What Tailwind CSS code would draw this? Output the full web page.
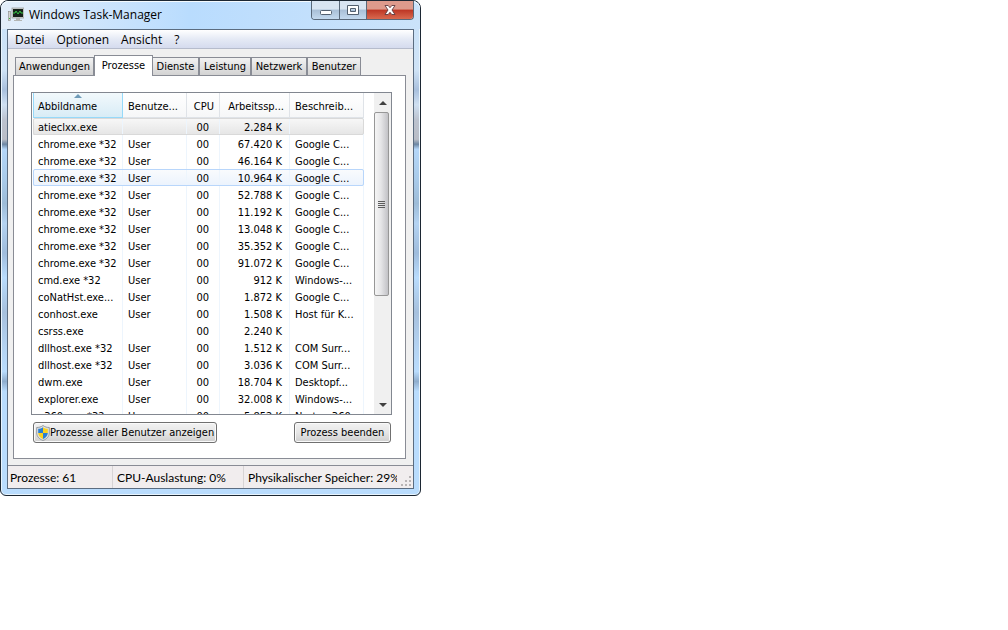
<!DOCTYPE html>
<html lang="de">
<head>
  <meta charset="UTF-8">
  <meta name="viewport" content="width=device-width, initial-scale=1.0">
  <title>Windows Task-Manager</title>
  <script src="https://cdn.jsdelivr.net/npm/@tailwindcss/browser@4"></script>
</head>
<body class="bg-white font-['Open_Sans','Noto_Sans',sans-serif] text-xs text-black">
  <!-- Fenster -->
  <div class="w-full max-w-[421px] rounded-t-lg rounded-b-md border border-[#1c2733] bg-[linear-gradient(#c9e2fa_0%,#cfe3f6_14%,#a9c0dd_18%,#cfe0f2_21%,#bcc3cf_24%,#b9bdc6_28%,#6d87a3_29%,#b4d6f8_30%,#a9cbea_36%,#9dbcd8_41%,#b4d3f2_45%,#9fbcdc_51%,#b9dcfd_56%,#a6c0dd_63%,#b4d3f2_70%,#b9dcfd_75%,#8fadcd_77%,#b9dcfd_79%,#b9dcfd_100%)] px-[6px] pb-[6px] shadow-[inset_0_0_0_1px_#e8f4fd]">

    <!-- Titelleiste -->
    <header class="-mx-[6px] flex h-7 items-start justify-between rounded-t-lg bg-linear-to-r from-[#e3eefa] via-[#b9dcfe] via-45% to-[#cbe3fa] px-[6px] shadow-[inset_0_1px_0_#f4fafe]">
      <div class="flex h-7 items-center gap-[5px] pl-px">
        <svg class="h-4 w-4" viewBox="0 0 16 16">
          <rect x="0.500" y="4.500" width="2" height="9" fill="#d6d6d2" stroke="#8b8b88" stroke-width=".6"/>
          <rect x="1" y="11" width="1" height="1" fill="#3cb43c"/>
          <rect x="4" y="1" width="12" height="10" fill="#d7d9d8" stroke="#929694" stroke-width=".7"/>
          <rect x="5" y="2" width="10" height="8" fill="#17211b"/>
          <path d="M5 6h2l1-2 2 3 2-3 1 2h2" fill="none" stroke="#35c645"/>
          <path d="M8 11h4v2h2v1H6v-1h2z" fill="#b3b5b3"/>
        </svg>
        <h1>Windows Task-Manager</h1>
      </div>
      <div class="flex h-[19px] overflow-hidden rounded-b border border-t-0 border-[#596879]">
        <button type="button" aria-label="Minimieren" class="flex w-7 items-center justify-center border-r border-[#596879] bg-linear-to-b from-[#d9e5f2] from-45% via-[#a9bfd6] via-50% to-[#c3d9ee]">
          <svg class="h-3 w-3" viewBox="0 0 12 12"><rect x=".5" y="6.500" width="11" height="4" rx="1" fill="#fff" stroke="#53606f"/></svg>
        </button>
        <button type="button" aria-label="Maximieren" class="flex w-[27px] items-center justify-center border-r border-[#596879] bg-linear-to-b from-[#d9e5f2] from-45% via-[#a9bfd6] via-50% to-[#c3d9ee]">
          <svg class="h-3 w-3" viewBox="0 0 12 12"><path d="M.5 1.500h11v9H.5zM3.500 4.500h5v3h-5z" fill="#fff" fill-rule="evenodd" stroke="#53606f"/></svg>
        </button>
        <button type="button" aria-label="Schließen" class="flex w-[46px] items-center justify-center bg-linear-to-b from-[#dd9a8c] from-45% via-[#bd3524] via-50% to-[#d9694f]">
          <svg class="h-3 w-3" viewBox="0 0 12 12"><path d="M1 1.500h3.200L6 3.700l1.800-2.200H11L8 6l3 4.500H7.800L6 8.300l-1.800 2.200H1L4 6z" fill="#fff" stroke="#5d3a3e" stroke-width=".9"/></svg>
        </button>
      </div>
    </header>

    <div class="border border-[#5b6c80] bg-[#f0f0f0]">
      <!-- Menü -->
      <nav class="flex h-[19px] items-center gap-3 border-b border-[#b6bccc] bg-linear-to-b from-white via-[#e5eaf5] via-50% to-[#d5dbee] pt-px pl-[7px]">
        <a href="#">Datei</a>
        <a href="#">Optionen</a>
        <a href="#">Ansicht</a>
        <a href="#">?</a>
      </nav>

      <div class="px-[5px] pt-[6px] pb-[6px] font-['DejaVu_Sans_Condensed','DejaVu_Sans',sans-serif] text-[11px]">
        <!-- Registerkarten -->
        <div role="tablist" class="flex items-end pl-[2px]">
          <button type="button" role="tab" class="h-[18px] w-[79px] border border-b-0 border-[#898c95] bg-linear-to-b from-[#f2f2f2] to-[#d3d3d3] pt-[2px] whitespace-nowrap">Anwendungen</button>
          <button type="button" role="tab" aria-selected="true" class="-mb-px h-[21px] w-[59px] border border-b-0 border-[#898c95] bg-white whitespace-nowrap">Prozesse</button>
          <button type="button" role="tab" class="h-[18px] w-[46px] border border-b-0 border-l-0 border-[#898c95] bg-linear-to-b from-[#f2f2f2] to-[#d3d3d3] pt-[2px] whitespace-nowrap">Dienste</button>
          <button type="button" role="tab" class="h-[18px] w-[52px] border border-b-0 border-[#898c95] bg-linear-to-b from-[#f2f2f2] to-[#d3d3d3] pt-[2px] whitespace-nowrap">Leistung</button>
          <button type="button" role="tab" class="h-[18px] w-14 border border-b-0 border-[#898c95] bg-linear-to-b from-[#f2f2f2] to-[#d3d3d3] pt-[2px] whitespace-nowrap">Netzwerk</button>
          <button type="button" role="tab" class="h-[18px] w-[54px] border border-b-0 border-[#898c95] bg-linear-to-b from-[#f2f2f2] to-[#d3d3d3] pt-[2px] whitespace-nowrap">Benutzer</button>
        </div>

        <div role="tabpanel" class="mr-[2px] border border-[#898c95] bg-white pt-4 pr-[13px] pb-[15px] pl-[17px]">
          <!-- Prozessliste -->
          <div class="flex h-[323px] overflow-hidden border border-[#828790]">
            <div class="min-w-0 flex-1 overflow-hidden pl-px">
              <table class="w-[331px] table-fixed border-separate border-spacing-0">
                <colgroup>
                  <col class="w-[90px]"><col class="w-16"><col class="w-[33px]"><col class="w-[70px]"><col class="w-[74px]">
                </colgroup>
                <thead>
                  <tr class="h-[25px]">
                    <th class="relative border-x border-b border-[#96d9f9] bg-linear-to-b from-[#f2f9fc] to-[#d8ecf6] px-1 pt-1 text-left font-normal">
                      <svg class="absolute top-px left-10 h-1 w-2" viewBox="0 0 8 4"><path d="M0 4l4-4 4 4z" fill="#6f9bb8"/></svg>
                      Abbildname
                    </th>
                    <th class="border-r border-b border-[#dfe3e8] bg-linear-to-b from-white to-[#f6f7f8] px-[5px] pt-1 text-left font-normal whitespace-nowrap">Benutze...</th>
                    <th class="border-r border-b border-[#dfe3e8] bg-linear-to-b from-white to-[#f6f7f8] px-[5px] pt-1 text-right font-normal whitespace-nowrap">CPU</th>
                    <th class="border-r border-b border-[#dfe3e8] bg-linear-to-b from-white to-[#f6f7f8] px-[5px] pt-1 text-right font-normal whitespace-nowrap">Arbeitssp...</th>
                    <th class="border-r border-b border-[#dfe3e8] bg-linear-to-b from-white to-[#f6f7f8] px-[5px] pt-1 text-left font-normal whitespace-nowrap">Beschreib...</th>
                  </tr>
                </thead>
                <tbody id="processes"></tbody>
              </table>
            </div>
            <!-- Bildlaufleiste -->
            <div class="flex w-[17px] flex-col bg-[#f0f0f0]">
              <button type="button" aria-label="Nach oben" class="flex h-[19px] items-center justify-center"><svg class="h-1 w-2" viewBox="0 0 8 4"><path d="M0 4l4-4 4 4z" fill="#404040"/></svg></button>
              <div class="mr-[2px] flex h-[184px] flex-col items-center justify-center gap-px rounded-xs border border-[#979797] bg-linear-to-r from-[#f5f5f5] via-[#e6e6e8] via-45% to-[#c2c2c6]">
                <span class="h-px w-[7px] bg-[#5c5c5c]"></span>
                <span class="h-px w-[7px] bg-[#5c5c5c]"></span>
                <span class="h-px w-[7px] bg-[#5c5c5c]"></span>
                <span class="h-px w-[7px] bg-[#5c5c5c]"></span>
              </div>
              <button type="button" aria-label="Nach unten" class="mt-auto flex h-[19px] items-center justify-center"><svg class="h-1 w-2" viewBox="0 0 8 4"><path d="M0 0h8L4 4z" fill="#404040"/></svg></button>
            </div>
          </div>

          <div class="mt-[7px] flex justify-between pr-px pl-[2px]">
            <button type="button" class="flex h-[21px] w-[184px] items-center rounded-[3px] border border-[#707070] bg-linear-to-b from-[#f2f2f2] via-[#e6e6e6] to-[#cfcfcf] pl-[2px] whitespace-nowrap shadow-[inset_0_0_0_1px_#fafafa]">
              <svg class="h-4 w-[14px]" viewBox="0 0 14 16">
                <path d="M7 .5C5 2 3 2.500 .7 2.500V8c0 3.500 2.500 6 6.300 7.500C10.800 14 13.300 11.500 13.300 8V2.500C11 2.500 9 2 7 .5z" fill="#dfe3e6" stroke="#85898d" stroke-width=".8"/>
                <path d="M7 2.200C5.500 3.200 4 3.700 2.200 3.800V8H7z" fill="#2a7fd4"/>
                <path d="M7 2.200C8.500 3.200 10 3.700 11.800 3.800V8H7z" fill="#fbd21f"/>
                <path d="M2.200 8C2.400 10.700 4 12.700 7 14V8z" fill="#fbd21f"/>
                <path d="M11.800 8C11.600 10.700 10 12.700 7 14V8z" fill="#2a7fd4"/>
              </svg>
              <span class="pt-[2px]">Prozesse aller Benutzer anzeigen</span>
            </button>
            <button type="button" class="h-[21px] w-[97px] rounded-[3px] border border-[#707070] bg-linear-to-b from-[#f2f2f2] via-[#e6e6e6] to-[#cfcfcf] pt-[2px] whitespace-nowrap shadow-[inset_0_0_0_1px_#fafafa]">Prozess beenden</button>
          </div>
        </div>
      </div>

      <!-- Statusleiste -->
      <footer class="flex h-[23px] items-center border-t border-[#898c95] bg-[#f1edee] font-[Lato,sans-serif] whitespace-nowrap">
        <span class="h-full w-[105px] border-r border-[#d7d4d5] pt-1 pl-[2px]">Prozesse: 61</span>
        <span class="h-full w-[131px] border-r border-[#d7d4d5] pt-1 pl-1">CPU-Auslastung: 0%</span>
        <span class="h-full w-[153px] overflow-hidden pt-1 pl-1">Physikalischer Speicher: 29%</span>
        <svg class="mt-auto ml-auto h-3 w-3" viewBox="0 0 12 12" fill="#b8b4b5"><path d="M8 0h2v2H8zM8 4h2v2H8zM8 8h2v2H8zM4 4h2v2H4zM4 8h2v2H4zM0 8h2v2H0z"/></svg>
      </footer>
    </div>
  </div>

  <script>
    // Name, Benutzer, CPU, Arbeitsspeicher, Beschreibung
    const processes = [
      ['atieclxx.exe', '', '00', '2.284 K', ''],
      ['chrome.exe *32', 'User', '00', '67.420 K', 'Google C...'],
      ['chrome.exe *32', 'User', '00', '46.164 K', 'Google C...'],
      ['chrome.exe *32', 'User', '00', '10.964 K', 'Google C...'],
      ['chrome.exe *32', 'User', '00', '52.788 K', 'Google C...'],
      ['chrome.exe *32', 'User', '00', '11.192 K', 'Google C...'],
      ['chrome.exe *32', 'User', '00', '13.048 K', 'Google C...'],
      ['chrome.exe *32', 'User', '00', '35.352 K', 'Google C...'],
      ['chrome.exe *32', 'User', '00', '91.072 K', 'Google C...'],
      ['cmd.exe *32', 'User', '00', '912 K', 'Windows-...'],
      ['coNatHst.exe...', 'User', '00', '1.872 K', 'Google C...'],
      ['conhost.exe', 'User', '00', '1.508 K', 'Host für K...'],
      ['csrss.exe', '', '00', '2.240 K', ''],
      ['dllhost.exe *32', 'User', '00', '1.512 K', 'COM Surr...'],
      ['dllhost.exe *32', 'User', '00', '3.036 K', 'COM Surr...'],
      ['dwm.exe', 'User', '00', '18.704 K', 'Desktopf...'],
      ['explorer.exe', 'User', '00', '32.008 K', 'Windows-...'],
      ['n360.exe *32', 'User', '00', '5.852 K', 'Norton 360']
    ];
    const selectedRow = 0;
    const hoverRow = 3;

    const tbody = document.getElementById('processes');
    processes.forEach((process, index) => {
      const tr = document.createElement('tr');
      tr.className = 'h-[17px]';
      if (index === selectedRow) {
        tr.className = 'h-[17px] rounded-xs bg-linear-to-b from-[#f8f8f8] to-[#e5e5e5] outline outline-[#d9d9d9] -outline-offset-1';
      } else if (index === hoverRow) {
        tr.className = 'h-[17px] rounded-xs bg-linear-to-b from-[#fafbfd] to-[#ebf3fd] outline outline-[#b8d6fb] -outline-offset-1';
      }

      process.forEach((text, col) => {
        const td = document.createElement('td');
        td.className = 'border-r border-[#edf5fd] p-0 pt-[2px] pl-[5px] leading-[15px] whitespace-nowrap';
        if (col === 2) {
          td.className = 'border-r border-[#edf5fd] p-0 pt-[2px] pr-[10px] text-right leading-[15px] whitespace-nowrap';
        } else if (col === 3) {
          td.className = 'border-r border-[#edf5fd] p-0 pt-[2px] pr-[7px] text-right leading-[15px] whitespace-nowrap';
        }
        td.textContent = text;
        tr.appendChild(td);
      });
      tbody.appendChild(tr);
    });
  </script>
</body>
</html>
